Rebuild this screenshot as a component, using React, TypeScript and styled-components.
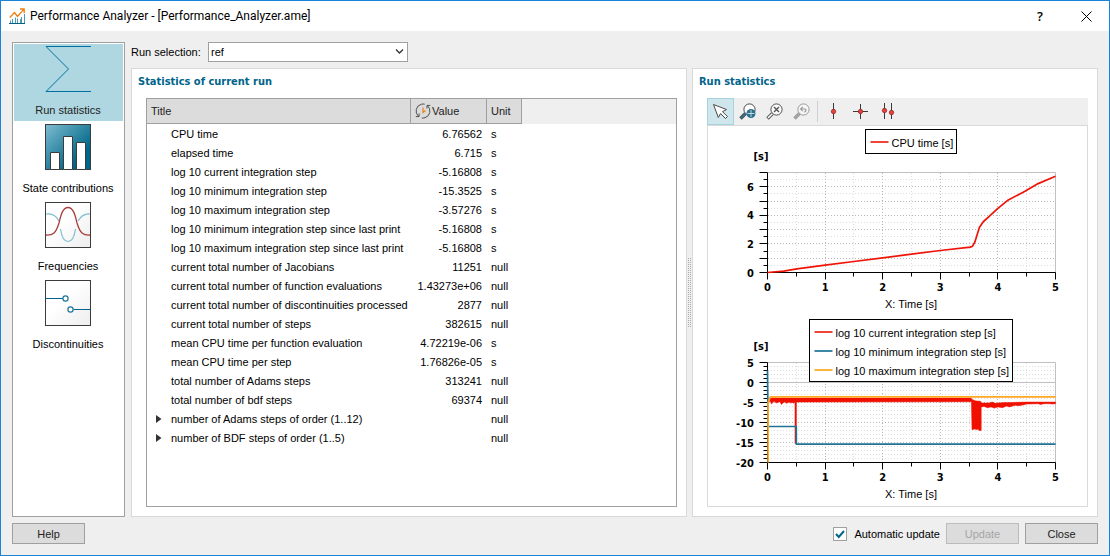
import React from "react";
import styled, { createGlobalStyle, css } from "styled-components";

const BORDER = "#a0a0a0";
const SOFT_BORDER = "#d9d9d9";
const SURFACE = "#efefef";
const BRAND = "#00648b";
const UI_FONT = '"Liberation Sans", Arial, sans-serif';
const CAPTION_FONT = 'Roboto, "Liberation Sans", sans-serif';
const BOLD_FONT = '"DejaVu Sans Condensed", "DejaVu Sans", sans-serif';

const GlobalStyle = createGlobalStyle`
  *, *::before, *::after { box-sizing: border-box; }
  body { margin: 0; background: ${SURFACE}; }
  body, button, select, input { font-family: ${UI_FONT}; font-size: 11px; color: #000; }
`;

const Window = styled.div`
  display: flex;
  flex-direction: column;
  min-height: 100vh;
  border: 1px solid #1883d7;
  background: ${SURFACE};
`;

const TitleBar = styled.header`
  display: flex;
  align-items: center;
  height: 30px;
  padding-left: 8px;
  background: #fff;
`;

const WindowTitle = styled.h1`
  flex: 1;
  margin: 0 0 0 4px;
  font-family: ${CAPTION_FONT};
  font-size: 12px;
  font-weight: 400;
  line-height: 30px;
`;

const CaptionButton = styled.button`
  display: flex;
  align-items: center;
  justify-content: center;
  width: 46px;
  height: 30px;
  padding: 0;
  border: 0;
  background: transparent;
  font: 600 13px/30px "Open Sans", sans-serif;
`;

const Main = styled.main`
  flex: 1;
  display: flex;
  gap: 6px;
  padding: 11px 11px 6px;
`;

const Sidebar = styled.nav`
  display: flex;
  flex-direction: column;
  flex: none;
  gap: 1px;
  width: 113px;
  padding: 1px;
  border: 1px solid ${BORDER};
  background: #fff;
`;

const SidebarItem = styled.button<{ $active?: boolean }>`
  display: flex;
  flex-direction: column;
  align-items: center;
  height: 77px;
  padding: 2px 1px 0 0;
  border: 0;
  background: ${(p) => (p.$active ? "#afd7e1" : "transparent")};
  color: ${(p) => (p.$active ? "#222" : "#000")};
  svg { display: block; }
  span { margin-top: 10px; line-height: 16px; white-space: nowrap; }
`;

const Content = styled.div`
  flex: 1;
  display: flex;
  flex-direction: column;
  gap: 6px;
  min-width: 0;
`;

const RunRow = styled.div`
  display: flex;
  align-items: center;
  height: 20px;
  label { width: 77px; white-space: nowrap; }
`;

const SelectBox = styled.div`
  position: relative;
  width: 200px;
  height: 20px;
  svg { position: absolute; right: 4px; top: 6px; pointer-events: none; }
`;

const Select = styled.select`
  appearance: none;
  width: 100%;
  height: 100%;
  padding: 0 20px 0 2px;
  border: 1px solid ${BORDER};
  border-radius: 0;
  background: #fff;
`;

const Panels = styled.div`
  flex: 1;
  display: grid;
  grid-template-columns: minmax(0, 556fr) 5px minmax(0, 406fr);
`;

const Group = styled.section`
  display: flex;
  flex-direction: column;
  padding: 0 9px 9px 14px;
  border: 1px solid ${SOFT_BORDER};
  background: #fff;
`;

const GroupTitle = styled.h2`
  margin: 0 0 4px -8px;
  font-family: ${BOLD_FONT};
  font-size: 11px;
  font-weight: 700;
  line-height: 25px;
  color: ${BRAND};
`;

const Splitter = styled.div`
  display: flex;
  align-items: center;
  justify-content: center;
`;

const TableFrame = styled.div`
  flex: 1;
  border: 1px solid ${BORDER};
  background: #fff;
  overflow: hidden;
`;

const Table = styled.table`
  width: 100%;
  table-layout: fixed;
  border-collapse: separate;
  border-spacing: 0;
`;

const HeadCell = styled.th<{ $filler?: boolean }>`
  height: 25px;
  padding: 0 4px;
  border-bottom: 1px solid ${BORDER};
  background: #dcdcdc;
  color: #222;
  font-weight: 400;
  text-align: left;
  ${(p) =>
    p.$filler
      ? css`
          background: ${SURFACE};
          border-color: ${SURFACE};
        `
      : css`
          border-right: 1px solid ${BORDER};
        `}
  > div { display: flex; align-items: center; gap: 1px; }
`;

const Cell = styled.td<{ $align?: "right" }>`
  height: 19px;
  padding: 1px 5px 0 4px;
  line-height: 18px;
  text-align: ${(p) => p.$align ?? "left"};
  white-space: nowrap;
`;

const TitleCell = styled.div`
  display: grid;
  grid-template-columns: 20px auto;
  align-items: center;
  justify-content: start;
  span { grid-column: 2; }
`;

const Expander = styled.button`
  display: flex;
  padding: 0 0 0 5px;
  border: 0;
  background: transparent;
`;

const Toolbar = styled.div`
  display: flex;
  align-items: center;
  height: 27px;
  background: ${SURFACE};
`;

const ToolButton = styled.button<{ $active?: boolean }>`
  display: flex;
  align-items: center;
  justify-content: center;
  width: 27px;
  height: 27px;
  padding: 0;
  border: 1px solid ${(p) => (p.$active ? "#a6d3de" : "transparent")};
  background: ${(p) => (p.$active ? "#cfe6ec" : "transparent")};
`;

const ToolSeparator = styled.div`
  width: 1px;
  height: 21px;
  margin: 0 2px;
  background: #cfcfcf;
`;

const PlotFrame = styled.div`
  flex: 1;
  border: 1px solid ${SOFT_BORDER};
  background: #fff;
`;

const ChartSvg = styled.svg`
  display: block;
  width: 100%;
  font-size: 11px;
`;

const AxisLabels = styled.g`
  font-family: ${BOLD_FONT};
  font-weight: 700;
`;

const Footer = styled.footer`
  display: flex;
  align-items: center;
  gap: 6px;
  padding: 0 11px 11px;
`;

const PushButton = styled.button`
  width: 73px;
  height: 21px;
  padding: 0;
  border: 1px solid ${BORDER};
  background: #dcdcdc;
  color: #222;
  &:disabled { color: #a6a6a6; border-color: #bcbcbc; }
`;

const AutoUpdate = styled.label`
  display: flex;
  align-items: center;
  gap: 7px;
  margin-left: auto;
`;

const Checkbox = styled.input`
  appearance: none;
  width: 14px;
  height: 14px;
  margin: 0;
  border: 1px solid ${BORDER};
  background: #fff
    url("data:image/svg+xml,%3Csvg xmlns='http://www.w3.org/2000/svg' viewBox='0 0 12 12'%3E%3Cpath d='M2 6l2.8 3L10 3' fill='none' stroke='%2300648b' stroke-width='2'/%3E%3C/svg%3E")
    center / 12px no-repeat;
  &:not(:checked) { background-image: none; }
`;

/* ---------- icons ---------- */

const AppIcon = () => (
  <svg width="17" height="17" viewBox="0 0 17 17" fill="none">
    <path d="M0 15.500h16" stroke="#00648b" />
    <path d="M1.500 15v-2.500M3.500 15v-4M6.500 15V9.500M8.500 15v-4.500M11.500 15v-4M12.500 15V9M15.500 15V6" stroke="#4f9ab5" />
    <path d="M.8 9.500 5.500 4.500l3 4L14.500 1.600M11 1h4.200v4.200" stroke="#ee8012" strokeWidth="1.300" />
  </svg>
);

const SigmaIcon = () => (
  <svg width="46" height="46" viewBox="0 0 46 46" fill="none" stroke="#0070a0">
    <path d="M46 .5H1L23.5 23 1 45.500H46" />
  </svg>
);

const FramedIcon = ({ fill, children }: { fill: string; children: React.ReactNode }) => (
  <svg width="46" height="46" viewBox="0 0 46 46">
    <defs>
      <linearGradient id="tealFill" x1="0" y1="0" x2="1" y2="1">
        <stop offset="0" stopColor="#7fbdd0" />
        <stop offset=".75" stopColor="#006689" />
        <stop offset="1" stopColor="#006689" />
      </linearGradient>
      <linearGradient id="greyFill" x1="0" y1="0" x2="1" y2="1">
        <stop offset=".4" stopColor="#fff" />
        <stop offset="1" stopColor="#ededed" />
      </linearGradient>
    </defs>
    <rect x=".5" y=".5" width="45" height="45" fill={`url(#${fill})`} stroke="#3c3c3c" />
    {children}
  </svg>
);

const BarsIcon = () => (
  <FramedIcon fill="tealFill">
    <path d="M5.500 45.500v-17h9v17zM18.500 45.500v-33h9v33zM31.500 45.500v-27h9v27z" fill="#fff" stroke="#3c3c3c" />
  </FramedIcon>
);

const FrequenciesIcon = () => (
  <FramedIcon fill="greyFill">
    <path d="M1 12c6-1 10 1 13 7M15.500 27c1 7 3 12.500 7.500 12.500S29.500 34 30.500 27M33 19c3-5 6-7.500 12-7" fill="none" stroke="#7fbdd0" strokeWidth="1.200" />
    <path d="M1 33c7 .5 10-2 13-12 2-9 4-15.500 9-15.500S30 12 32 21c3 10 6 12.500 13 12" fill="none" stroke="#a8403c" strokeWidth="1.300" />
  </FramedIcon>
);

const DiscontinuitiesIcon = () => (
  <FramedIcon fill="greyFill">
    <path d="M1 18.500h17M28.500 29.500H45" stroke="#00648b" />
    <circle cx="20.500" cy="18.500" r="2.600" fill="#fff" stroke="#1b7698" strokeWidth="1.200" />
    <circle cx="25.500" cy="29.500" r="2.600" fill="#fff" stroke="#1b7698" strokeWidth="1.200" />
  </FramedIcon>
);

const ClockIcon = () => (
  <svg width="16" height="16" viewBox="0 0 16 16" fill="none" stroke="#505050">
    <path d="M6.500 1.200A7 7 0 0 0 3.500 13.300M.8 13.600h3.300v-3.200M6.800 15a7 7 0 0 0 3.200-.3A7 7 0 0 0 12.500 2.700M15.300 2.400H12v3.200M6.500 1.200a7 7 0 0 1 3.200 0" />
    <path d="M8 4.500V9.500L10.500 7.500" stroke="#ee8012" strokeWidth="1.200" />
  </svg>
);

const PointerIcon = () => (
  <svg width="17" height="17" viewBox="0 0 17 17">
    <path d="M1.500 1.500 14.500 6.500 10.500 8.700 15.500 13.500 13.500 15.500 8.600 10.600 6.300 14.500z" fill="#fff" stroke="#4a4a4a" />
  </svg>
);

type MagnifierProps = { handle: string; ring: string; glass: string; children: React.ReactNode };

const Magnifier = ({ handle, ring, glass, children }: MagnifierProps) => (
  <svg width="17" height="17" viewBox="0 0 17 17" fill="none">
    <path d="M6.500 10.500 1.500 15.500" stroke={ring} strokeWidth="3.400" />
    <path d="M6.300 10.700 2 15" stroke={handle} strokeWidth="1.600" />
    <circle cx="10.500" cy="6.500" r="5.600" fill={glass} stroke={ring} />
    {children}
  </svg>
);

const ZoomAreaIcon = () => (
  <Magnifier handle="#2b7c9c" ring="#474747" glass="#fff">
    <circle cx="12" cy="10.500" r="4.500" fill="#2b6f8c" />
    <path d="M12 7v7M8.500 10.500h7" stroke="#b9dbe6" />
  </Magnifier>
);

const ZoomFitIcon = () => (
  <Magnifier handle="#fff" ring="#505050" glass="#fafafa">
    <path d="m8 4 5 5m0-5L8 9" stroke="#505050" strokeWidth="1.300" />
  </Magnifier>
);

const ZoomBackIcon = () => (
  <Magnifier handle="#a8a8a8" ring="#9a9a9a" glass="#f6f6f6">
    <path d="M8 6h3.500c2 0 2 3.200-.5 3M9.800 3.800 7.600 6l2.200 2.200" stroke="#9a9a9a" strokeWidth="1.200" />
  </Magnifier>
);

const CursorIcon = ({ lines, dots }: { lines: string; dots: [number, number][] }) => (
  <svg width="17" height="17" viewBox="0 0 17 17">
    <path d={lines} stroke="#3a3a3a" />
    {dots.map(([x, y]) => (
      <circle key={x} cx={x} cy={y} r="2.200" fill="#f04038" stroke="#7a2420" strokeWidth=".7" />
    ))}
  </svg>
);

/* ---------- charts ---------- */

type Point = [number, number];
type Series = { name: string; color: string; key: string; points: Point[]; width?: number };

const LEFT = 59.5;
const RIGHT = 347.5;
const TOP = 46.5;
const BOTTOM = 146.5;

const range = (from: number, to: number, step: number) =>
  Array.from({ length: Math.round((to - from) / step) + 1 }, (_, i) => from + i * step);

type ChartProps = {
  title: string;
  min: number;
  max: number;
  major: number;
  minor: number;
  label: number;
  series: Series[];
  legend: { x: number; width: number };
  band?: Point[];
};

const Chart = ({ title, min, max, major, minor, label, series, legend, band }: ChartProps) => {
  const px = (t: number) => LEFT + ((RIGHT - LEFT) * t) / 5;
  const py = (v: number) => BOTTOM - ((BOTTOM - TOP) * (v - min)) / (max - min);
  const crisp = (n: number) => Math.floor(n) + 0.5;
  const path = (pts: Point[]) => "M" + pts.map(([t, v]) => `${px(t).toFixed(1)} ${py(v).toFixed(1)}`).join("L");
  const isMajor = (v: number, step: number) => Math.abs(v / step - Math.round(v / step)) < 0.001;
  const ys = range(min, max, minor);
  const xs = range(0, 5, 0.5);
  const grid = (strong: boolean) => (strong ? "#b8b8b8" : "#dedede");

  return (
    <ChartSvg viewBox="0 0 379 190" role="img" aria-label={title}>
      {[false, true].map((strong) => (
        <g key={String(strong)} stroke={grid(strong)} strokeDasharray="1 2">
          {ys.filter((v) => isMajor(v, major) === strong).map((v) => (
            <path key={v} d={`M60 ${crisp(py(v))}H${RIGHT}`} />
          ))}
          {xs.filter((t) => isMajor(t, 1) === strong).map((t) => (
            <path key={t} d={`M${crisp(px(t))} 47V${BOTTOM}`} />
          ))}
        </g>
      ))}
      <path d={`M${LEFT} ${TOP}H${RIGHT}V${BOTTOM}${min < 0 ? `M${LEFT} ${py(0)}H${RIGHT}` : ""}`} fill="none" stroke="#c0c0c0" />
      <path
        d={
          `M${LEFT} ${TOP}V${BOTTOM}H${RIGHT}` +
          ys.map((v) => `M${LEFT} ${crisp(py(v))}h${isMajor(v, major) ? -8 : -4}`).join("") +
          xs.map((t) => `M${crisp(px(t))} ${BOTTOM}v${isMajor(t, 1) ? 7 : 4}`).join("")
        }
        fill="none"
        stroke="#000"
      />
      {band && <path d={path(band) + "Z"} fill="#f01000" stroke="#f01000" strokeWidth=".5" />}
      {series.map((s) => (
        <path key={s.name} d={path(s.points)} fill="none" stroke={s.color} strokeWidth={s.width ?? 1.5} strokeLinejoin="round" />
      ))}
      <AxisLabels>
        <text x="53" y="34" textAnchor="middle">[s]</text>
        {ys.filter((v) => isMajor(v, label)).map((v) => (
          <text key={v} x="46" y={Math.round(py(v)) + 4} textAnchor="end">{v}</text>
        ))}
        {range(0, 5, 1).map((t) => (
          <text key={t} x={px(t)} y="165" textAnchor="middle">{t}</text>
        ))}
      </AxisLabels>
      <text x="203" y="182" textAnchor="middle">X: Time [s]</text>
      <rect x={legend.x} y="3.5" width={legend.width} height={series.length * 19 + 5} fill="#fff" stroke="#000" />
      {series.map((s, i) => (
        <g key={s.name}>
          <path d={`M${legend.x + 5} ${16 + i * 19}h18`} stroke={s.key} strokeWidth="2" />
          <text x={legend.x + 26} y={21 + i * 19}>{s.name}</text>
        </g>
      ))}
    </ChartSvg>
  );
};

const cpuTime: Series = {
  name: "CPU time [s]",
  color: "#ee1408",
  key: "#f04438",
  width: 1.7,
  points: [
    [0, 0], [0.28, 0.1], [0.51, 0.25], [1, 0.51], [1.5, 0.77], [2, 1.03], [2.5, 1.28], [3, 1.54], [3.52, 1.78],
    [3.56, 1.84], [3.6, 2.14], [3.64, 2.66], [3.68, 3.17], [3.75, 3.57], [3.84, 3.9], [3.99, 4.45], [4.18, 5.08],
    [4.44, 5.62], [4.7, 6.22], [5, 6.74],
  ],
};

const integrationSteps: Series[] = [
  {
    name: "log 10 current integration step [s]",
    color: "#f01000",
    key: "#f04438",
    width: 2,
    points: [[0.49, -4.2], [0.49, -15.3]],
  },
  {
    name: "log 10 minimum integration step [s]",
    color: "#1f7396",
    key: "#3d87a6",
    width: 1.7,
    points: [[0, 3], [0.01, -11], [0.5, -11], [0.5, -15.4], [5, -15.4]],
  },
  {
    name: "log 10 maximum integration step [s]",
    color: "#ffa81f",
    key: "#ffb43c",
    width: 1.7,
    points: [[0.01, -20], [0.01, -5], [0.05, -3.6], [5, -3.6]],
  },
];

const stepBand: Point[] = [
  [0.03, -3.9], [3.53, -3.9], [3.56, -4.3], [3.62, -4.6], [3.7, -4.7], [3.71, -5.1], [3.85, -5.1], [3.9, -4.9],
  [3.96, -5.2], [4.1, -5], [4.2, -5], [4.5, -4.9], [5, -4.9], [5, -5.3], [4.95, -5.4], [4.9, -5.3], [4.8, -5.3],
  [4.74, -5.5], [4.7, -5.3], [4.5, -5.4], [4.44, -5.6], [4.36, -5.8], [4.3, -5.7], [4.2, -6.1], [4.15, -5.9],
  [4.08, -6.3], [4, -6.1], [3.94, -6.4], [3.88, -6.1], [3.82, -6.3], [3.76, -6], [3.71, -6.1], [3.71, -12],
  [3.67, -12], [3.66, -11.6], [3.63, -11.8], [3.6, -11.6], [3.55, -11.8], [3.54, -4.8], [0.48, -4.9],
  [0.45, -5.2], [0.43, -4.9], [0.41, -5.2], [0.38, -4.9], [0.33, -5.2], [0.3, -4.9], [0.28, -5], [0.24, -5.5],
  [0.22, -4.8], [0.15, -5.1], [0.12, -4.7], [0.09, -5], [0.07, -5.4], [0.05, -4.7], [0.03, -4.9],
];

/* ---------- data ---------- */

const rows: { title: string; value?: string; unit: string }[] = [
  { title: "CPU time", value: "6.76562", unit: "s" },
  { title: "elapsed time", value: "6.715", unit: "s" },
  { title: "log 10 current integration step", value: "-5.16808", unit: "s" },
  { title: "log 10 minimum integration step", value: "-15.3525", unit: "s" },
  { title: "log 10 maximum integration step", value: "-3.57276", unit: "s" },
  { title: "log 10 minimum integration step since last print", value: "-5.16808", unit: "s" },
  { title: "log 10 maximum integration step since last print", value: "-5.16808", unit: "s" },
  { title: "current total number of Jacobians", value: "11251", unit: "null" },
  { title: "current total number of function evaluations", value: "1.43273e+06", unit: "null" },
  { title: "current total number of discontinuities processed", value: "2877", unit: "null" },
  { title: "current total number of steps", value: "382615", unit: "null" },
  { title: "mean CPU time per function evaluation", value: "4.72219e-06", unit: "s" },
  { title: "mean CPU time per step", value: "1.76826e-05", unit: "s" },
  { title: "total number of Adams steps", value: "313241", unit: "null" },
  { title: "total number of bdf steps", value: "69374", unit: "null" },
  { title: "number of Adams steps of order (1..12)", unit: "null" },
  { title: "number of BDF steps of order (1..5)", unit: "null" },
];

const pages = [
  { label: "Run statistics", icon: <SigmaIcon /> },
  { label: "State contributions", icon: <BarsIcon /> },
  { label: "Frequencies", icon: <FrequenciesIcon /> },
  { label: "Discontinuities", icon: <DiscontinuitiesIcon /> },
];

export default function App() {
  return (
    <Window>
      <GlobalStyle />
      <TitleBar>
        <AppIcon />
        <WindowTitle>Performance Analyzer - [Performance_Analyzer.ame]</WindowTitle>
        <CaptionButton aria-label="Help">?</CaptionButton>
        <CaptionButton aria-label="Close window">
          <svg width="11" height="11" viewBox="0 0 11 11" stroke="#000">
            <path d="m.5.5 10 10m0-10-10 10" />
          </svg>
        </CaptionButton>
      </TitleBar>

      <Main>
        <Sidebar>
          {pages.map((p, i) => (
            <SidebarItem key={p.label} $active={i === 0}>
              {p.icon}
              <span>{p.label}</span>
            </SidebarItem>
          ))}
        </Sidebar>

        <Content>
          <RunRow>
            <label htmlFor="run">Run selection:</label>
            <SelectBox>
              <Select id="run" defaultValue="ref">
                <option value="ref">ref</option>
              </Select>
              <svg width="9" height="7" viewBox="0 0 9 7" fill="none" stroke="#333" strokeWidth="1.300">
                <path d="m1 1.500 3.500 3.500L8 1.500" />
              </svg>
            </SelectBox>
          </RunRow>

          <Panels>
            <Group>
              <GroupTitle>Statistics of current run</GroupTitle>
              <TableFrame>
                <Table>
                  <colgroup>
                    <col style={{ width: 264 }} />
                    <col style={{ width: 76 }} />
                    <col style={{ width: 35 }} />
                    <col />
                  </colgroup>
                  <thead>
                    <tr>
                      <HeadCell>Title</HeadCell>
                      <HeadCell>
                        <div>
                          <ClockIcon />
                          Value
                        </div>
                      </HeadCell>
                      <HeadCell>Unit</HeadCell>
                      <HeadCell $filler aria-hidden />
                    </tr>
                  </thead>
                  <tbody>
                    {rows.map((r) => (
                      <tr key={r.title}>
                        <Cell>
                          <TitleCell>
                            {!r.value && (
                              <Expander aria-label={`Expand ${r.title}`}>
                                <svg width="6" height="8" viewBox="0 0 6 8">
                                  <path d="M0 0 5.500 4 0 8z" fill="#333" />
                                </svg>
                              </Expander>
                            )}
                            <span>{r.title}</span>
                          </TitleCell>
                        </Cell>
                        <Cell $align="right">{r.value}</Cell>
                        <Cell>{r.unit}</Cell>
                        <Cell />
                      </tr>
                    ))}
                  </tbody>
                </Table>
              </TableFrame>
            </Group>

            <Splitter>
              <svg width="5" height="70" viewBox="0 0 5 70">
                <path d="M1.500 0v70M3.500 0v70" stroke="#a8a8a8" strokeDasharray="1 1" />
              </svg>
            </Splitter>

            <Group>
              <GroupTitle>Run statistics</GroupTitle>
              <Toolbar>
                <ToolButton $active aria-label="Select"><PointerIcon /></ToolButton>
                <ToolButton aria-label="Zoom area"><ZoomAreaIcon /></ToolButton>
                <ToolButton aria-label="Zoom to fit"><ZoomFitIcon /></ToolButton>
                <ToolButton aria-label="Previous zoom"><ZoomBackIcon /></ToolButton>
                <ToolSeparator />
                <ToolButton aria-label="Vertical cursor">
                  <CursorIcon lines="M8.500 0v16" dots={[[8.5, 8.5]]} />
                </ToolButton>
                <ToolButton aria-label="Cross cursor">
                  <CursorIcon lines="M8.500 1v15M1 8.500h15" dots={[[8.5, 8.5]]} />
                </ToolButton>
                <ToolButton aria-label="Double cursor">
                  <CursorIcon lines="M5.500 0v16M12.500 0v16" dots={[[5.5, 7.5], [12.5, 9.5]]} />
                </ToolButton>
              </Toolbar>
              <PlotFrame>
                <Chart
                  title="CPU time"
                  min={0} max={7} major={1} minor={0.5} label={2}
                  series={[cpuTime]}
                  legend={{ x: 157.5, width: 91 }}
                />
                <Chart
                  title="Integration step"
                  min={-20} max={5} major={5} minor={1} label={5}
                  series={integrationSteps}
                  legend={{ x: 101.5, width: 203 }}
                  band={stepBand}
                />
              </PlotFrame>
            </Group>
          </Panels>
        </Content>
      </Main>

      <Footer>
        <PushButton>Help</PushButton>
        <AutoUpdate>
          <Checkbox type="checkbox" defaultChecked />
          Automatic update
        </AutoUpdate>
        <PushButton disabled>Update</PushButton>
        <PushButton>Close</PushButton>
      </Footer>
    </Window>
  );
}
